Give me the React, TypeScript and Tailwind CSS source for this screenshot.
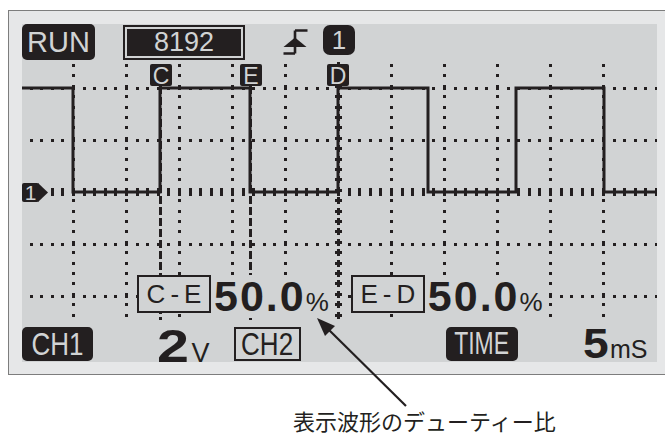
import React from "react";

const DARK = "#231f20";

// grid geometry, in LCD pixels
const V_LINES = [51, 104, 157, 210, 263, 369, 422, 475, 528, 581];
const H_LINES = [64, 116, 220, 272];
const CX = 316;
const CY = 168;

function steps(start: number, end: number, step: number) {
  const out: number[] = [];
  for (let v = start; v <= end + 0.01; v += step) out.push(Math.round(v));
  return out;
}

const Marker = ({ x, label }: { x: number; label: string }) => (
  <g>
    <rect x={x - 11} y={40} width={22} height={22} rx={2} fill={DARK} />
    <text x={x} y={60} textAnchor="middle" fontFamily="Liberation Sans, sans-serif" fontSize={23} fill="#d1d3d4">
      {label}
    </text>
  </g>
);

const ScopeTrace = () => {
  const xs = steps(8.6, 634, 10.6);
  const ys = steps(41, 296, 10.4);
  const wave = "M0 64 H51 V168 H138 V64 H228 V168 H316 V64 H406 V168 H494 V64 H582 V168 H635";

  return (
    <svg className="absolute inset-0" width={635} height={338} viewBox="0 0 635 338">
      {/* dotted grid */}
      {H_LINES.map((y) => xs.map((x) => <rect key={`h${y}-${x}`} x={x - 1} y={y - 1} width={3} height={3} fill={DARK} />))}
      {V_LINES.map((x) => ys.map((y) => <rect key={`v${x}-${y}`} x={x - 1} y={y - 1} width={3} height={3} fill={DARK} />))}

      {/* centre axes */}
      {xs.map((x) => (
        <rect key={`cx${x}`} x={x - 1} y={CY - 4} width={3} height={8} fill={DARK} />
      ))}
      {ys.map((y) => (
        <g key={`cy${y}`} fill={DARK}>
          <rect x={CX - 3} y={y - 1} width={7} height={3} />
          <rect x={CX - 1} y={y - 3} width={3} height={7} />
        </g>
      ))}

      {/* cursors C and E */}
      <line x1={138.5} y1={62} x2={138.5} y2={296} stroke={DARK} strokeWidth={3} strokeDasharray="8 3" />
      <line x1={228.5} y1={62} x2={228.5} y2={296} stroke={DARK} strokeWidth={3} strokeDasharray="8 3" />

      {/* square wave */}
      <path d={wave} fill="none" stroke={DARK} strokeWidth={3} strokeLinecap="square" />

      <Marker x={139} label="C" />
      <Marker x={229} label="E" />
      <Marker x={316} label="D" />

      {/* channel 1 marker */}
      <rect x={0} y={159} width={17} height={19} rx={2} fill={DARK} />
      <path d="M16 159 L26 168.5 L16 178 Z" fill={DARK} />
      <text x={8.5} y={176} textAnchor="middle" fontFamily="Liberation Sans, sans-serif" fontSize={21} fill="#d1d3d4">
        1
      </text>
    </svg>
  );
};

const TriggerIcon = () => (
  <svg className="ml-[38px] mt-[5px]" width="25" height="27" viewBox="0 0 25 27">
    <path d="M12 1.5 H24.5 M12 1.5 V24.5 M0.5 24.5 H12" stroke={DARK} strokeWidth="2.6" fill="none" />
    <path d="M12 8.5 L23.5 18 L0.5 18 Z" fill={DARK} />
  </svg>
);

export default function App() {
  return (
    <div className="relative h-[435px] w-[665px] overflow-hidden bg-white font-['Liberation_Sans',sans-serif] text-[#231f20]">
      {/* bezel */}
      <div className="ml-[8px] mt-[10px] w-[657px] border border-r-0 border-[#7d7d7d] bg-[#e6e7e8] pb-[12px] pl-[13px] pr-[8px] pt-[13px]">
        {/* LCD */}
        <div className="relative flex h-[338px] w-[635px] flex-col bg-[#d1d3d4]">
          <ScopeTrace />

          {/* top status row */}
          <div className="relative flex h-[36px] items-start">
            <div className="flex h-[36px] w-[73px] items-center justify-center rounded-[5px] bg-[#231f20] text-[29px] leading-none text-[#d1d3d4]">
              RUN
            </div>
            <div className="ml-[28px] mt-[1px] h-[35px] w-[122px] border-2 border-[#231f20] p-[2px]">
              <div className="flex h-full items-center justify-center bg-[#231f20] text-[27px] leading-none text-[#d1d3d4]">
                8192
              </div>
            </div>
            <TriggerIcon />
            <div className="ml-[15px] mt-[1px] flex h-[30px] w-[32px] items-center justify-center rounded-[7px] bg-[#231f20] text-[26px] leading-none text-[#d1d3d4]">
              1
            </div>
          </div>

          {/* duty readouts */}
          <div className="relative mt-[215px] flex h-[38px] items-start">
            <div className="ml-[115px] flex h-[38px] w-[74px] items-center justify-center border-2 border-[#231f20] bg-[#d1d3d4] pl-[5px] text-[26px] leading-none tracking-[5px]">
              C-E
            </div>
            <div className="flex items-baseline bg-[#d1d3d4] pl-[3px] pr-[2px] text-[43px] font-bold leading-none tracking-[2px]">
              50.0<span className="text-[26px] font-normal tracking-normal">%</span>
            </div>
            <div className="ml-[20px] flex h-[38px] w-[74px] items-center justify-center border-2 border-[#231f20] bg-[#d1d3d4] pl-[5px] text-[26px] leading-none tracking-[5px]">
              E-D
            </div>
            <div className="flex items-baseline bg-[#d1d3d4] pl-[3px] pr-[2px] text-[43px] font-bold leading-none tracking-[2px]">
              50.0<span className="text-[26px] font-normal tracking-normal">%</span>
            </div>
          </div>

          {/* bottom settings row */}
          <div className="relative mt-[14px] flex h-[34px] items-start">
            <div className="flex h-[34px] w-[71px] items-center justify-center rounded-[5px] bg-[#231f20] text-[#d1d3d4]">
              <span className="inline-block scale-y-[1.18] text-[26px] leading-none">CH1</span>
            </div>
            <div className="-mt-[4px] ml-[64px] flex items-baseline leading-none">
              <span className="inline-block origin-left scale-x-[1.25] text-[46px] font-bold">2</span>
              <span className="ml-[9px] text-[27px]">V</span>
            </div>
            <div className="ml-[24px] flex h-[34px] w-[67px] items-center justify-center border-2 border-[#231f20]">
              <span className="inline-block scale-y-[1.18] text-[26px] leading-none">CH2</span>
            </div>
            <div className="ml-[145px] flex h-[34px] w-[72px] items-center justify-center rounded-[5px] bg-[#231f20] text-[#d1d3d4]">
              <span className="inline-block scale-y-[1.33] text-[23px] leading-none">TIME</span>
            </div>
            <div className="-mt-[4px] ml-[65px] flex items-baseline leading-none">
              <span className="inline-block origin-left scale-x-[1.1] text-[42px] font-bold">5</span>
              <span className="ml-[4px] text-[25px]">mS</span>
            </div>
          </div>
        </div>
      </div>

      {/* caption */}
      <div className="mt-[34px] pl-[293px] font-['Noto_Sans_CJK_JP',sans-serif] text-[22px] leading-none text-[#231f20]">
        表示波形のデューティー比
      </div>

      {/* callout arrow */}
      <svg className="pointer-events-none absolute inset-0" width={665} height={435} viewBox="0 0 665 435">
        <line x1={328} y1={329} x2={406} y2={406} stroke={DARK} strokeWidth={2.2} />
        <path d="M317 318 L325 336 L335 326 Z" fill={DARK} />
      </svg>
    </div>
  );
}
